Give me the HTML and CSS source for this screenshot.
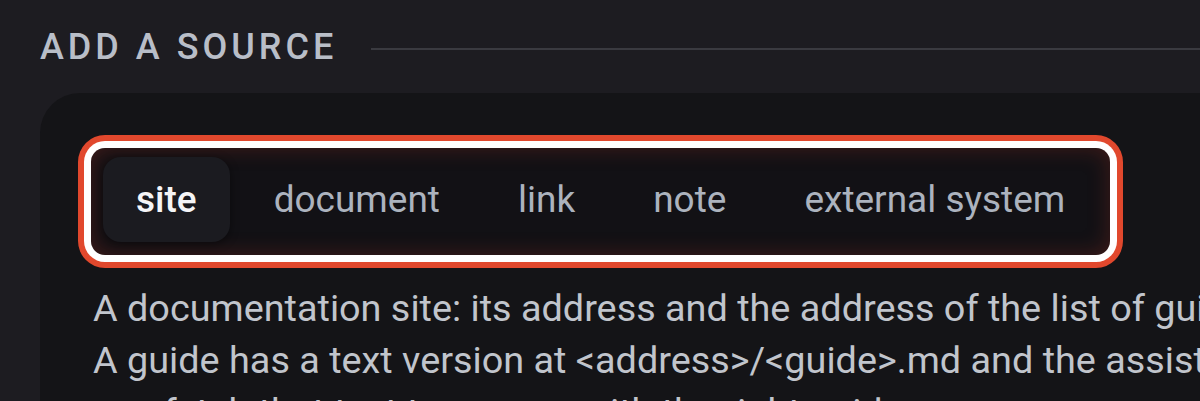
FILE: index.html
```html
<!DOCTYPE html>
<html lang="en">
<head>
<meta charset="utf-8">
<title>Add a source</title>
<link rel="stylesheet" href="styles.css">
</head>
<body>
<main class="page">
  <header class="section-head">
    <h2 class="section-title">ADD A SOURCE</h2>
    <div class="section-rule"></div>
  </header>
  <section class="card">
    <div class="tabs" role="tablist">
      <button class="tab active" role="tab">site</button>
      <button class="tab" role="tab">document</button>
      <button class="tab" role="tab">link</button>
      <button class="tab" role="tab">note</button>
      <button class="tab" role="tab">external system</button>
    </div>
    <p class="desc">A documentation site: its address and the address of the list of guides.<br>A guide has a text version at &lt;address&gt;/&lt;guide&gt;.md and the assistant<br>can fetch that text to answer with the right guide.</p>
  </section>
</main>
</body>
</html>
```
FILE: styles.css
```css
* { box-sizing: border-box; }
html, body { margin: 0; padding: 0; }
body {
  background: #1d1c21;
  font-family: Roboto, "Liberation Sans", sans-serif;
  overflow: hidden;
  height: 401px;
}
.page {
  padding: 22px 0 0 40px;
}
.section-head {
  display: flex;
  align-items: center;
  gap: 34px;
  height: 50px;
}
.section-title {
  margin: 0;
  font-size: 36px;
  font-weight: 500;
  letter-spacing: 4px;
  color: #b9bec8;
  white-space: nowrap;
  line-height: 50px;
}
.section-rule {
  flex: 1;
  height: 2px;
  background: #3a3a40;
  margin-top: 4px;
}
.card {
  margin-top: 21px;
  background: #141417;
  border-radius: 40px 0 0 0;
  padding: 55px 0 0 51px;
  height: 400px;
}
.tabs {
  display: inline-flex;
  gap: 10px;
  padding: 9px 11px 13px 12px;
  background: #121115;
  border-radius: 14px;
  box-shadow: inset 0 0 22px rgba(190, 55, 35, 0.28), 0 0 0 7px #ffffff, 0 0 0 13px #e1482d;
}
.tab {
  font-family: Roboto, "Liberation Sans", sans-serif;
  font-size: 37px;
  font-weight: 400;
  color: #acb3be;
  background: transparent;
  border: 0;
  padding: 0 34px;
  height: 85px;
  border-radius: 18px;
  cursor: pointer;
}
.tab.active {
  background: #1b1b20;
  color: #f5f5f7;
  font-weight: 500;
  padding: 0 33px;
  box-shadow: 0 2px 10px rgba(0, 0, 0, 0.45);
}
.desc {
  margin: 27px 0 0 2px;
  font-size: 37.8px;
  line-height: 52px;
  color: #c1c5cc;
  white-space: nowrap;
}
```
